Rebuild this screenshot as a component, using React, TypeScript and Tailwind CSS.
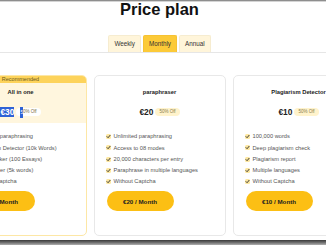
import React from "react";

type Plan = {
  title: string;
  price: string;
  features: string[];
  button: string;
  recommended?: boolean;
};

const plans: Plan[] = [
  {
    title: "All in one",
    price: "€30",
    recommended: true,
    features: [
      "Unlimited paraphrasing",
      "Plagiarism Detector (10k Words)",
      "Essay Maker (100 Essays)",
      "Summarizer (5k words)",
      "Without Captcha",
    ],
    button: "€30 / Month",
  },
  {
    title: "paraphraser",
    price: "€20",
    features: [
      "Unlimited paraphrasing",
      "Access to 08 modes",
      "20,000 characters per entry",
      "Paraphrase in multiple languages",
      "Without Captcha",
    ],
    button: "€20 / Month",
  },
  {
    title: "Plagiarism Detector",
    price: "€10",
    features: [
      "100,000 words",
      "Deep plagiarism check",
      "Plagiarism report",
      "Multiple languages",
      "Without Captcha",
    ],
    button: "€10 / Month",
  },
];

function Check() {
  return (
    <svg width="5" height="5" viewBox="0 0 10 10" className="shrink-0">
      <rect x="0" y="0" width="10" height="10" rx="3" fill="#fde7a0" />
      <path d="M2 5.2 L4.2 7.4 L8.2 2.6" fill="none" stroke="#2a2a2a" strokeWidth="1.8" strokeLinecap="round" strokeLinejoin="round" />
    </svg>
  );
}

function Card({ plan }: { plan: Plan }) {
  const rec = !!plan.recommended;
  return (
    <div
      className={
        "shrink-0 w-[132px] h-[161px] rounded-[5px] overflow-hidden border bg-white flex flex-col " +
        (rec ? "border-[#fde7a6]" : "border-[#e8e8e8]")
      }
    >
      <div className={rec ? "bg-[#fff6de] pb-[6px]" : "pb-[6px]"}>
        {rec ? (
          <div className="h-[7px] bg-[#fdd35b] text-center text-[5.5px] leading-[7px] text-[#6b5a1c]">
            Recommended
          </div>
        ) : (
          <div className="h-[7px]" />
        )}
        <div className="mt-[5px] h-[8px] text-center text-[5.8px] leading-[8px] font-bold text-[#222]">
          {plan.title}
        </div>
        <div className="mt-[11px] h-[10px] flex items-center justify-center gap-[2px]">
          <span
            className={
              "text-[8.4px] leading-[10px] font-bold " +
              (rec ? "bg-[#2f62d6] text-white" : "text-[#222]")
            }
          >
            {plan.price}
          </span>
          <span
            className={
              "h-[8px] px-[4px] rounded-full text-[4.5px] leading-[8px] flex items-center " +
              (rec ? "bg-white text-[#7a6c45]" : "bg-[#fff3cc] text-[#8b7b4a]")
            }
          >
            {rec ? (
              <>
                <span className="bg-[#2f62d6] text-white h-[11px] leading-[11px] inline-block">5</span>
                0% Off
              </>
            ) : (
              "50% Off"
            )}
          </span>
        </div>
      </div>
      <div className="pt-[8px] pl-[11px] flex flex-col">
        {plan.features.map((f) => (
          <div key={f} className="h-[11.25px] flex items-center gap-[3px] whitespace-nowrap">
            <Check />
            <span className="text-[5.7px] text-[#555]">{f}</span>
          </div>
        ))}
      </div>
      <div className="mt-[4px] ml-[12px] w-[67px] h-[20px] rounded-full bg-[#fcbf14] flex items-center justify-center text-[6.2px] font-bold text-[#222]">
        {plan.button}
      </div>
    </div>
  );
}

export default function App() {
  return (
    <div
      className="w-[326px] h-[245px] overflow-hidden bg-white flex flex-col"
      style={{ fontFamily: '"Liberation Sans", Arial, sans-serif' }}
    >
      <div className="h-px bg-[#8e8e8e]" />
      <div className="h-px bg-[#d4d4d4]" />
      <div className="pr-[7px] h-[15px] text-center text-[16.5px] leading-[15px] font-bold text-[#111]">
        Price plan
      </div>
      <div className="mt-[18px] border-b border-[#e6e6e6]">
        <div className="pr-[7px] flex justify-center gap-[2px]">
          {["Weekly", "Monthly", "Annual"].map((t) => (
            <div
              key={t}
              className={
                "h-[17px] px-[5px] flex items-center text-[6.3px] text-[#333] rounded-t-[2px] border border-b-0 " +
                (t === "Monthly"
                  ? "bg-[#fcca38] border-[#f6c233]"
                  : "bg-[#fff5da] border-[#f6ecd0]")
              }
            >
              {t}
            </div>
          ))}
        </div>
      </div>
      <div className="mt-[22px] pr-[7px] flex justify-center gap-[7px]">
        {plans.map((p) => (
          <Card key={p.title} plan={p} />
        ))}
      </div>
      <div className="mt-[4px] h-[5px] bg-gradient-to-b from-[#3a3a3a] via-[#6e6e6e] to-[#b0b0b0]" />
    </div>
  );
}
